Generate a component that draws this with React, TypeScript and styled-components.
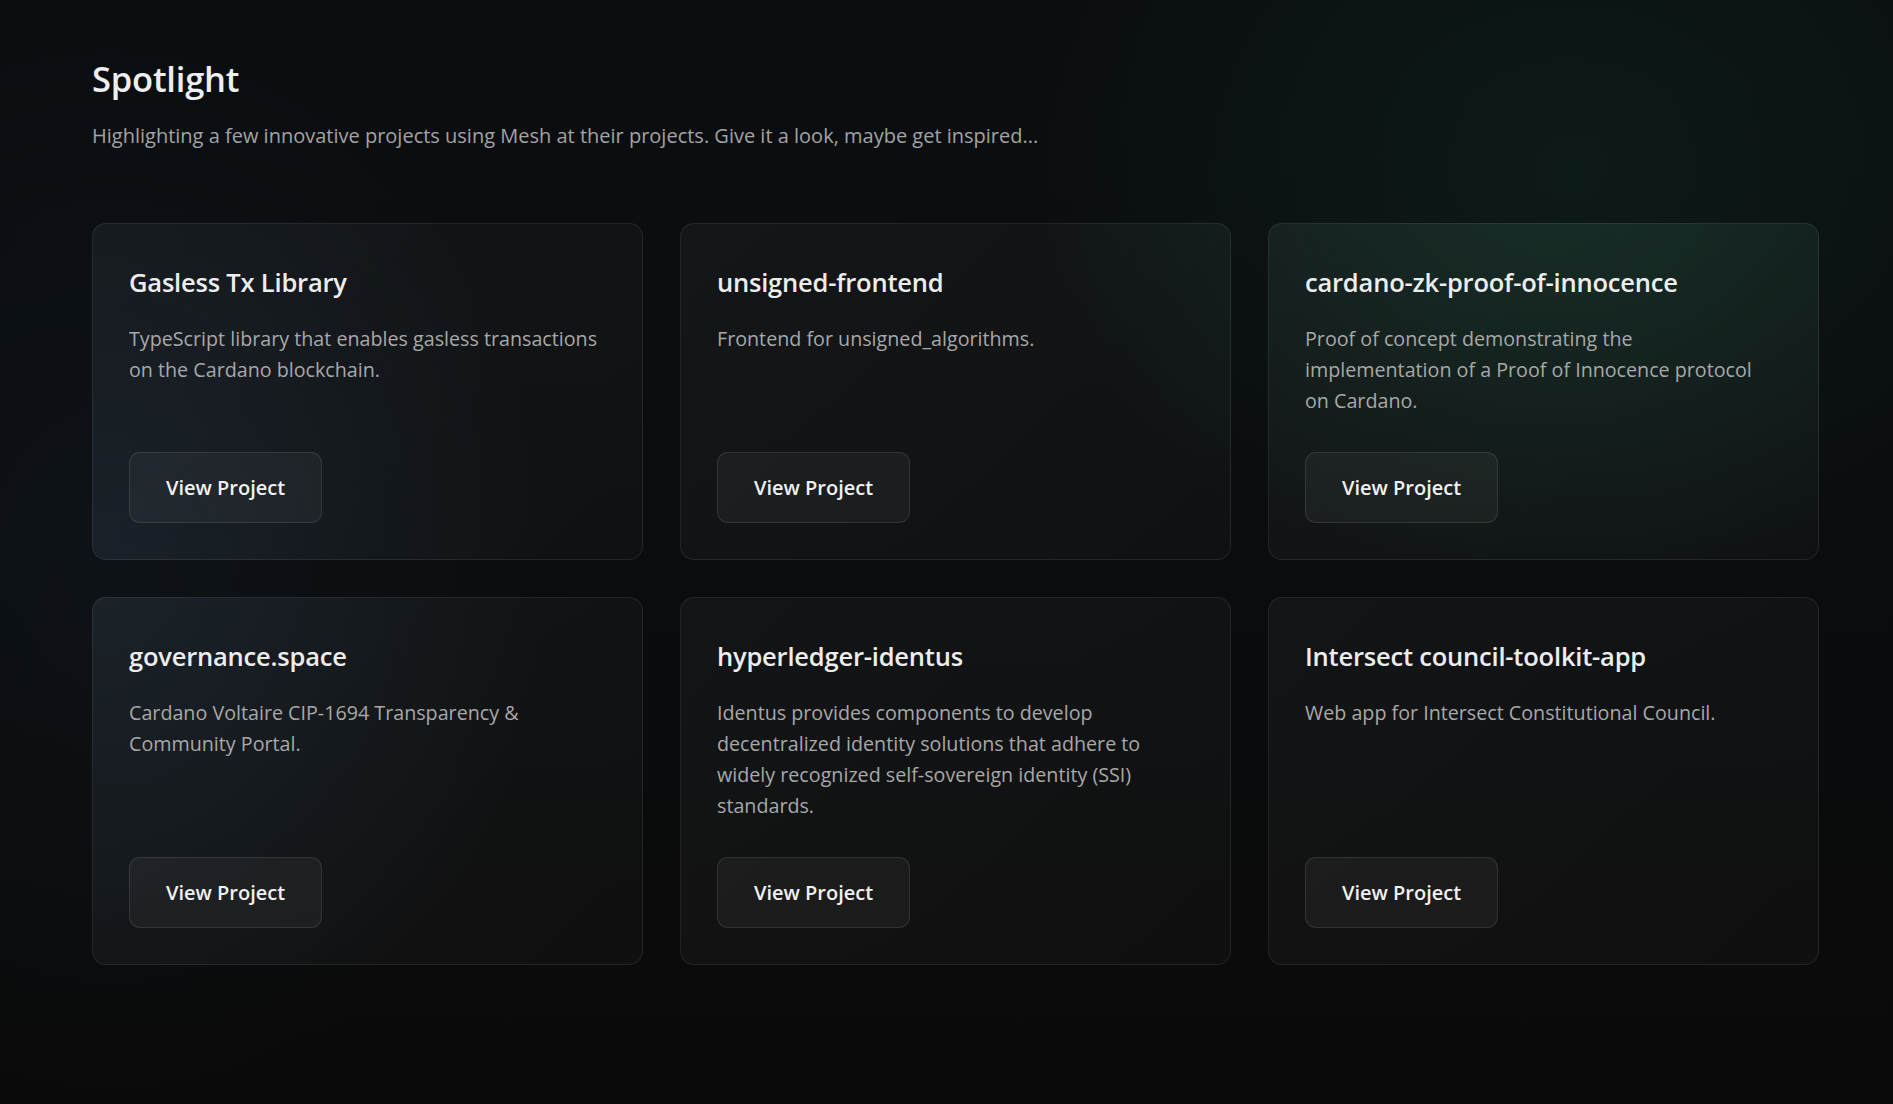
import styled, { createGlobalStyle } from 'styled-components';

const glow = (green: number, blue: number) => `
	radial-gradient(760px 600px at 83% 16%, rgba(22, 78, 56, ${green}), transparent 70%),
	radial-gradient(620px 760px at 6% 52%, rgba(34, 56, 78, ${blue}), transparent 70%)
`;

const GlobalStyle = createGlobalStyle`
	* {
		box-sizing: border-box;
	}

	html,
	body,
	#root {
		min-height: 100%;
		height: 100%;
	}

	body {
		margin: 0;
		font-family: 'Open Sans', 'Noto Sans', sans-serif;
		color: #ececec;
		background: ${glow(0.2, 0.14)}, linear-gradient(180deg, #0b0e11 0%, #0a0a0a 100%);
		background-attachment: fixed;
	}
`;

const Page = styled.main`
	min-height: 100vh;
	padding: 58px 74px 80px 92px;
`;

const Header = styled.header`
	display: flex;
	flex-direction: column;
	gap: 21px;
	margin-bottom: 72px;
`;

const Title = styled.h1`
	margin: 0;
	font-size: 34.5px;
	line-height: 42px;
	font-weight: 600;
	color: #eeeeee;
	letter-spacing: -0.2px;
`;

const Subtitle = styled.p`
	margin: 0;
	font-size: 20px;
	line-height: 30px;
	color: #a3a3a3;
`;

const Grid = styled.section`
	display: grid;
	grid-template-columns: repeat(3, 1fr);
	gap: 37px;
`;

const Card = styled.article`
	display: flex;
	flex-direction: column;
	padding: 36px;
	border-radius: 14px;
	border: 1px solid rgba(255, 255, 255, 0.08);
	background: linear-gradient(135deg, rgba(255, 255, 255, 0.04), rgba(255, 255, 255, 0.022)),
		${glow(0.26, 0.2)};
	background-attachment: scroll, fixed, fixed;
`;

const CardTitle = styled.h2`
	margin: 0 0 19px;
	font-size: 25.5px;
	line-height: 44px;
	font-weight: 600;
	color: #ededed;
	letter-spacing: -0.2px;
`;

const CardText = styled.p`
	margin: 0 0 36px;
	font-size: 19.7px;
	line-height: 31px;
	color: #a8a8a8;
	max-width: 472px;
`;

const Button = styled.a`
	margin-top: auto;
	align-self: flex-start;
	display: inline-flex;
	align-items: center;
	justify-content: center;
	height: 71px;
	padding: 0 36px;
	border-radius: 11px;
	border: 1px solid rgba(255, 255, 255, 0.1);
	background: rgba(255, 255, 255, 0.045);
	color: #f0f0f0;
	font-size: 20px;
	font-weight: 600;
	text-decoration: none;
	cursor: pointer;
`;

const projects = [
	{
		title: 'Gasless Tx Library',
		text: 'TypeScript library that enables gasless transactions on the Cardano blockchain.'
	},
	{
		title: 'unsigned-frontend',
		text: 'Frontend for unsigned_algorithms.'
	},
	{
		title: 'cardano-zk-proof-of-innocence',
		text: 'Proof of concept demonstrating the implementation of a Proof of Innocence protocol on Cardano.'
	},
	{
		title: 'governance.space',
		text: 'Cardano Voltaire CIP-1694 Transparency & Community Portal.'
	},
	{
		title: 'hyperledger-identus',
		text: 'Identus provides components to develop decentralized identity solutions that adhere to widely recognized self-sovereign identity (SSI) standards.'
	},
	{
		title: 'Intersect council-toolkit-app',
		text: 'Web app for Intersect Constitutional Council.'
	}
];

const App = () => {
	return (
		<>
			<GlobalStyle />
			<Page>
				<Header>
					<Title>Spotlight</Title>
					<Subtitle>
						Highlighting a few innovative projects using Mesh at their projects. Give it a look,
						maybe get inspired...
					</Subtitle>
				</Header>
				<Grid>
					{projects.map((project) => (
						<Card key={project.title}>
							<CardTitle>{project.title}</CardTitle>
							<CardText>{project.text}</CardText>
							<Button>View Project</Button>
						</Card>
					))}
				</Grid>
			</Page>
		</>
	);
};

export default App;
